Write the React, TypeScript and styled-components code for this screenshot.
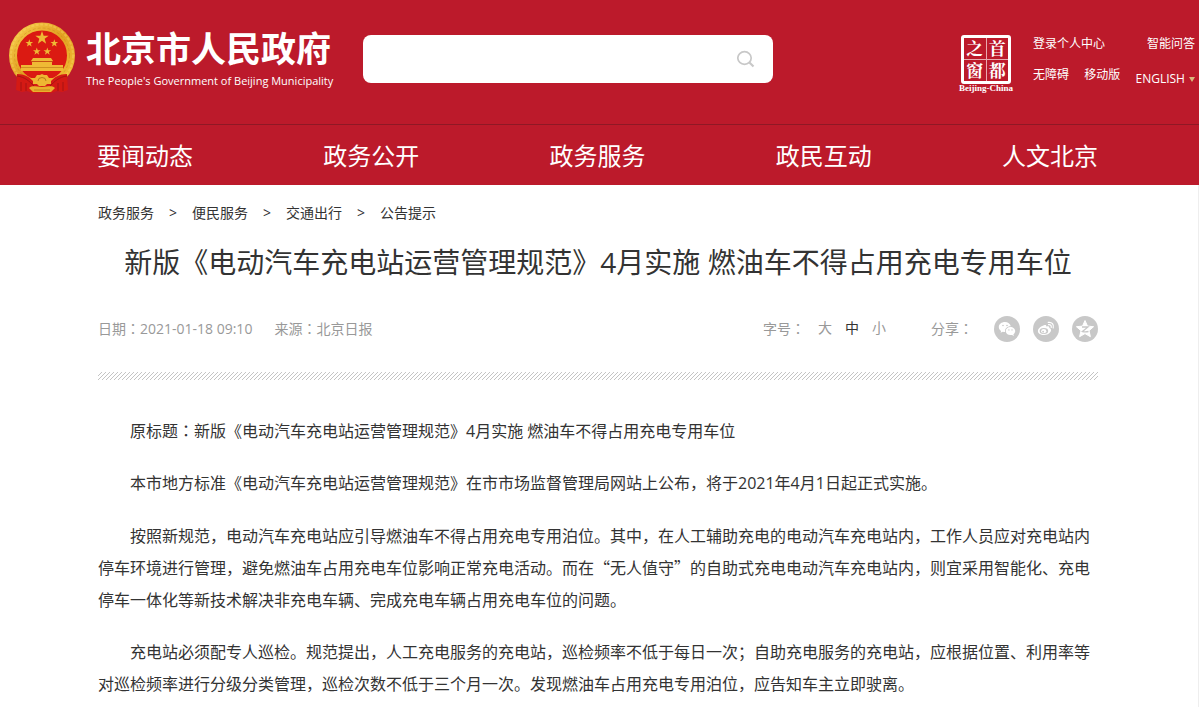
import React from "react";
import styled, { createGlobalStyle } from "styled-components";

const sans = `"Open Sans", "Noto Sans CJK SC", sans-serif`;

const GlobalStyle = createGlobalStyle`
  * { box-sizing: border-box; }
  body { margin: 0; background: #fff; color: #333; font: 14px/20px ${sans}; text-spacing-trim: space-all; overflow-x: hidden; }
  a { color: inherit; text-decoration: none; }
  button, input { font: inherit; color: inherit; border: 0; padding: 0; background: none; }
  button { cursor: pointer; }
`;

const Header = styled.header`
  background: #bc1a2b;
  color: #fff;
`;
const TopBar = styled.div`
  display: flex;
  align-items: flex-start;
  height: 125px;
  padding: 22px 4px 0 8px;
  border-bottom: 1px solid #8f1825;
`;
const Brand = styled.a`
  display: flex;
  gap: 10px;
  flex: none;
`;
const BrandText = styled.div`
  display: flex;
  flex-direction: column;
  width: 245px;
  padding-top: 3px;
`;
const BrandName = styled.strong`
  font: 700 35px/44px "Noto Sans CJK SC", sans-serif;
  white-space: nowrap;
`;
const BrandSub = styled.span`
  font-size: 11px;
  line-height: 24px;
  white-space: nowrap;
`;
const Search = styled.form`
  display: flex;
  align-items: center;
  width: 410px;
  height: 48px;
  margin: 13px 0 0 32px;
  padding-right: 18px;
  border-radius: 8px;
  background: #fff;
`;
const SearchInput = styled.input`
  flex: 1;
  min-width: 0;
  height: 100%;
  padding-left: 16px;
  color: #333;
  outline: none;
`;
const SearchButton = styled.button`
  display: flex;
`;
const Tools = styled.div`
  display: flex;
  gap: 20px;
  margin: 13px 0 0 auto;
`;
const Seal = styled.a`
  display: flex;
  flex-direction: column;
  align-items: center;
  width: 54px;
`;
const SealGrid = styled.span`
  display: grid;
  grid-template-columns: 1fr 1fr;
  gap: 1px;
  width: 50px;
  height: 49px;
  border: 3px solid #fff;
  border-radius: 3px;
  background: #e9a9af;
`;
const SealCell = styled.span`
  background: #bc1a2b;
  font: 700 17px/20px "Noto Serif CJK SC", "Noto Sans CJK SC", serif;
  text-align: center;
`;
const SealCaption = styled.span`
  font: 700 9px/9px "Liberation Serif", serif;
  white-space: nowrap;
`;
const Links = styled.nav`
  display: flex;
  flex-direction: column;
  width: 162px;
  font-size: 12px;
  line-height: 18px;
`;
const LinkRow = styled.div`
  display: flex;
  justify-content: space-between;
  height: 31px;
  white-space: nowrap;
`;
const Language = styled.a`
  display: flex;
  align-items: center;
  gap: 4px;
  height: 26px;
`;
const Triangle = styled.i`
  border: 3px solid transparent;
  border-top: 5px solid #d9b77c;
  border-bottom: 0;
`;

const MainNav = styled.nav`
  display: flex;
  justify-content: space-between;
  padding: 0 101px 0 97px;
  height: 60px;
  font-size: 24px;
  line-height: 62px;
  white-space: nowrap;
`;

const Page = styled.main`
  padding: 0 100px 24px 98px;
  border-right: 1px solid #eee;
`;
const Crumbs = styled.nav`
  display: flex;
  gap: 15px;
  padding-top: 18px;
`;
const Title = styled.h1`
  margin: 19px 0 0;
  font-size: 28px;
  font-weight: 400;
  line-height: 40px;
  text-align: center;
`;
const Meta = styled.div`
  display: flex;
  align-items: center;
  height: 28px;
  margin-top: 33px;
  color: #999;
  line-height: 18px;
`;
const Facts = styled.div`
  display: flex;
  gap: 22px;
  margin-right: auto;
  padding-bottom: 2px;
`;
const ColonMark = styled.span`
  font-family: "Noto Sans CJK JP", sans-serif;
`;
const Colon = () => <ColonMark lang="ja">：</ColonMark>;
const Sizes = styled.div`
  display: flex;
  gap: 13px;
  margin-right: 45px;
  padding-bottom: 2px;
`;
const SizeButton = styled.button<{ $active?: boolean }>`
  color: ${(p) => (p.$active ? "#333" : "inherit")};
`;
const Share = styled.div`
  display: flex;
  align-items: center;
  gap: 13px;
`;
const ShareLabel = styled.span`
  margin-right: 8px;
  padding-bottom: 2px;
`;
const ShareButton = styled.button`
  display: grid;
  place-items: center;
  width: 26px;
  height: 26px;
  border-radius: 50%;
  background: #c8c8c8;
`;
const Stripe = styled.div`
  height: 8px;
  margin-top: 29px;
  background: linear-gradient(135deg, transparent 38%, #c4c4c4 38% 62%, transparent 62%) 0 0 / 4px 4px;
`;
const Article = styled.article`
  padding: 14px 0 0;
  color: #333;
  font-size: 16px;
  line-height: 32px;
`;
const Paragraph = styled.p<{ $hanOnly?: boolean }>`
  margin: 20px 0 0;
  text-indent: 2em;
  font-family: ${(p) => (p.$hanOnly ? `"Noto Sans CJK SC", sans-serif` : sans)};
`;

const star = (cx: number, cy: number, r: number) =>
  Array.from({ length: 10 }, (_, i) => {
    const a = (Math.PI / 5) * i - Math.PI / 2;
    const q = i % 2 ? r * 0.4 : r;
    return `${cx + q * Math.cos(a)},${cy + q * Math.sin(a)}`;
  }).join(" ");

const Emblem = () => (
  <svg width="68" height="72" viewBox="0 0 68 72" aria-hidden="true">
    <defs>
      <linearGradient id="gold" x1="0" y1="0" x2="1" y2="1">
        <stop offset="0" stopColor="#f6cc4a" />
        <stop offset=".5" stopColor="#e2a021" />
        <stop offset="1" stopColor="#f2bf38" />
      </linearGradient>
    </defs>
    <circle cx="34" cy="33.5" r="29" fill="#db1a12" stroke="url(#gold)" strokeWidth="8" />
    <circle cx="34" cy="33.5" r="31" fill="none" stroke="#fbdc70" strokeWidth="2" strokeDasharray="3 1.5" opacity=".35" />
    <circle cx="34" cy="33.5" r="27.5" fill="none" stroke="#bd7813" strokeWidth="1" strokeDasharray="3 2" opacity=".35" />
    <g fill="#efb935">
      <polygon points={star(34, 16, 7)} />
      <polygon points={star(21.3, 21.3, 4)} />
      <polygon points={star(46.3, 21.3, 4)} />
      <polygon points={star(28.8, 29.5, 4)} />
      <polygon points={star(39.3, 29.5, 4)} />
      <path d="M25 36h18l2 3H23zM24 40h20v3h11v6H13v-6h11z" />
    </g>
    <path d="M23 39.5h22M13 45.5h42" stroke="#b97313" strokeWidth=".6" />
    <path d="M9 52c9 0 15 5 19 9l6 1 6-1c4-4 10-9 19-9l1 16-6 2-5-1-6 2H25l-6-2-5 1-6-2z" fill="#d41a14" />
    <path d="M9 54c8 1 12 5 17 10M59 54c-8 1-12 5-17 10M13 60v9M18 61v8M55 60v9M50 61v8" fill="none" stroke="#9a1112" strokeWidth=".8" />
    <path d="M22 56l5 0 2-3 3 0 2-1 2 1 3 0 2 3 5 0-3 3 0 3-4 0-2 2h-6l-2-2-4 0 0-3z" fill="#eeb632" />
    <path d="M30 59a4 3.500 0 0 1 8 0" fill="none" stroke="#a96c12" strokeWidth=".8" />
    <path d="M21 66c4-3 7-1 13-1s9-2 13 1l-4 4H25z" fill="#e9b02d" />
    <path d="M26 68h16" stroke="#b97313" strokeWidth=".7" />
  </svg>
);

const SearchIcon = () => (
  <svg width="18" height="18" viewBox="0 0 18 18" fill="none" stroke="#c8c8c8" strokeWidth="1.7">
    <ellipse cx="7.500" cy="8" rx="6.700" ry="6.300" />
    <path d="M12.4 12.5L16.500 16.500" strokeWidth="2.200" />
  </svg>
);

const WechatIcon = () => (
  <svg width="18" height="16" viewBox="0 0 18 16" fill="#fff">
    <path d="M7 1C3.5 1 .8 3.2.8 6c0 1.6.9 3 2.3 3.900L2.500 11.800 4.800 10.700c.8.2 1.500.3 2.300.3C6.500 7.800 9 5.200 12.800 5.200 12.200 2.700 9.900 1 7 1z" />
    <path d="M17.200 10c0-2.300-2.200-4.100-4.800-4.100S7.700 7.700 7.700 10s2.100 4.100 4.700 4.100c.6 0 1.100-.1 1.600-.2l1.900 1-.5-1.600c1.100-.8 1.800-1.900 1.800-3.300z" />
    <g fill="#c8c8c8"><circle cx="5" cy="4.500" r=".8" /><circle cx="9" cy="4.500" r=".8" /><circle cx="10.900" cy="8.900" r=".7" /><circle cx="14" cy="8.900" r=".7" /></g>
  </svg>
);
const WeiboIcon = () => (
  <svg width="18" height="16" viewBox="0 0 18 16" fill="none">
    <path d="M7.500 4.100c1.200-.5 2.100 0 1.700 1.500 1.800-.6 3.500-.5 3.100 1.400 1.700.6 2.300 1.900 1.300 3.700-1.100 2-3.800 3.300-6.700 3.300-3.400 0-6-1.600-6-4 0-2.500 3.700-5.100 6.600-5.900z" fill="#fff" />
    <ellipse cx="6.900" cy="10" rx="4.300" ry="2.900" fill="#c8c8c8" />
    <ellipse cx="6.700" cy="10.200" rx="2.600" ry="2.100" fill="#fff" />
    <circle cx="6.100" cy="10.700" r=".9" fill="#c8c8c8" />
    <path d="M11.500 3.700c1.900-.4 3.200 1 2.700 2.800M11.200 1.400c3.600-.7 6.100 2.100 5 5.600" stroke="#fff" strokeWidth="1.200" strokeLinecap="round" />
  </svg>
);
const QzoneIcon = () => (
  <svg width="20" height="20" viewBox="0 0 20 20">
    <path d="M10 1.500l2.500 5.600 6.100.6-4.600 4 1.400 6L10 14.600l-5.400 3.100 1.400-6-4.600-4 6.100-.6z" fill="#fff" stroke="#fff" strokeLinejoin="round" />
    <path d="M7 8h6l-5.500 4.500c2 .4 3.700.4 6 0" fill="none" stroke="#c8c8c8" strokeWidth="1.300" />
  </svg>
);

const crumbs = ["政务服务", "便民服务", "交通出行", "公告提示"];
const sections = ["要闻动态", "政务公开", "政务服务", "政民互动", "人文北京"];

export default function App() {
  return (
    <div lang="zh-CN">
      <GlobalStyle />
      <Header>
        <TopBar>
          <Brand href="#">
            <Emblem />
            <BrandText>
              <BrandName>北京市人民政府</BrandName>
              <BrandSub>The People's Government of Beijing Municipality</BrandSub>
            </BrandText>
          </Brand>
          <Search role="search" onSubmit={(e) => e.preventDefault()}>
            <SearchInput type="text" aria-label="搜索" />
            <SearchButton type="submit" aria-label="搜索"><SearchIcon /></SearchButton>
          </Search>
          <Tools>
            <Seal href="#">
              <SealGrid>
                {["之", "首", "窗", "都"].map((c) => <SealCell key={c}>{c}</SealCell>)}
              </SealGrid>
              <SealCaption>Beijing-China</SealCaption>
            </Seal>
            <Links>
              <LinkRow>
                <a href="#">登录个人中心</a>
                <a href="#">智能问答</a>
              </LinkRow>
              <LinkRow>
                <a href="#">无障碍</a>
                <a href="#">移动版</a>
                <Language href="#">ENGLISH<Triangle /></Language>
              </LinkRow>
            </Links>
          </Tools>
        </TopBar>
        <MainNav>
          {sections.map((s) => <a key={s} href="#">{s}</a>)}
        </MainNav>
      </Header>
      <Page>
        <Crumbs>
          {crumbs.map((c, i) => (
            <React.Fragment key={c}>
              {i > 0 && <span>&gt;</span>}
              <a href="#">{c}</a>
            </React.Fragment>
          ))}
        </Crumbs>
        <Title>新版《电动汽车充电站运营管理规范》4月实施 燃油车不得占用充电专用车位</Title>
        <Meta>
          <Facts>
            <span>日期<Colon />2021-01-18 09:10</span>
            <span>来源<Colon />北京日报</span>
          </Facts>
          <Sizes>
            <span>字号<Colon /></span>
            <SizeButton>大</SizeButton>
            <SizeButton $active>中</SizeButton>
            <SizeButton>小</SizeButton>
          </Sizes>
          <Share>
            <ShareLabel>分享<Colon /></ShareLabel>
            <ShareButton aria-label="微信"><WechatIcon /></ShareButton>
            <ShareButton aria-label="微博"><WeiboIcon /></ShareButton>
            <ShareButton aria-label="QQ空间"><QzoneIcon /></ShareButton>
          </Share>
        </Meta>
        <Stripe />
        <Article>
          <Paragraph>原标题<Colon />新版《电动汽车充电站运营管理规范》4月实施 燃油车不得占用充电专用车位</Paragraph>
          <Paragraph>本市地方标准《电动汽车充电站运营管理规范》在市市场监督管理局网站上公布，将于2021年4月1日起正式实施。</Paragraph>
          <Paragraph $hanOnly>按照新规范，电动汽车充电站应引导燃油车不得占用充电专用泊位。其中，在人工辅助充电的电动汽车充电站内，工作人员应对充电站内停车环境进行管理，避免燃油车占用充电车位影响正常充电活动。而在“无人值守”的自助式充电电动汽车充电站内，则宜采用智能化、充电停车一体化等新技术解决非充电车辆、完成充电车辆占用充电车位的问题。</Paragraph>
          <Paragraph $hanOnly>充电站必须配专人巡检。规范提出，人工充电服务的充电站，巡检频率不低于每日一次；自助充电服务的充电站，应根据位置、利用率等对巡检频率进行分级分类管理，巡检次数不低于三个月一次。发现燃油车占用充电专用泊位，应告知车主立即驶离。</Paragraph>
        </Article>
      </Page>
    </div>
  );
}
